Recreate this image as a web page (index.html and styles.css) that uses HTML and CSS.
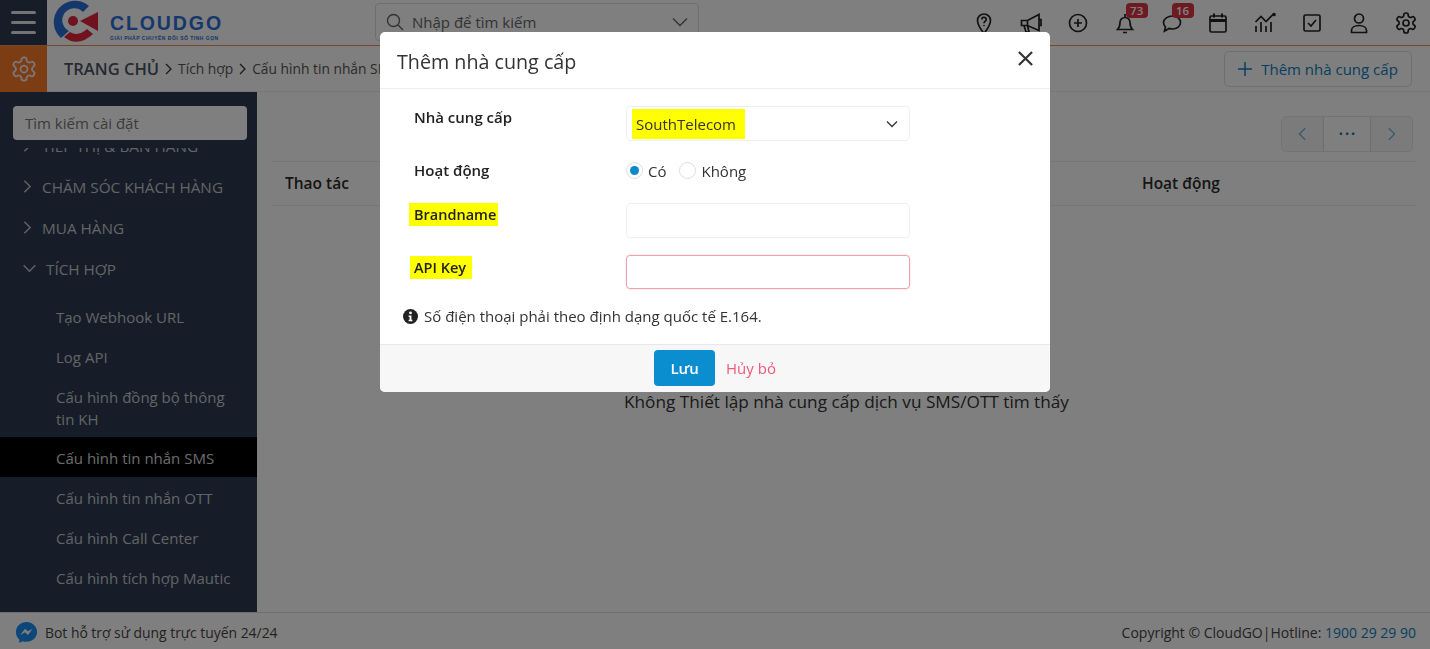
FILE: index.html
```html
<!DOCTYPE html>
<html lang="vi">
<head>
<meta charset="utf-8">
<title>Thiết lập nhà cung cấp</title>
<link rel="stylesheet" href="styles.css">
</head>
<body>
<div class="app">
  <header class="topbar">
    <div class="burger"><span></span><span></span><span></span></div>
    <div class="logo">
      <svg class="logo-mark" viewBox="0 0 50 44" width="50" height="44">
        <path d="M37 6A21 21 0 1 0 9 38L17 31A12 12 0 1 1 31 12Z" fill="#2a6fd8"/>
        <path d="M12 37Q26 48 41 34L35 29Q26 37 18 32Z" fill="#e0263f"/>
        <circle cx="21" cy="21" r="5" fill="#e0263f"/>
        <path d="M28 21 46 12V31Z" fill="#e0263f"/>
      </svg>
      <div class="logo-text">
        <div class="logo-name">CLOUDGO</div>
        <div class="logo-sub">GIẢI PHÁP CHUYỂN ĐỔI SỐ TINH GỌN</div>
      </div>
    </div>
    <div class="search">
      <svg viewBox="0 0 18 18" width="18" height="18" class="i-search"><circle cx="7.5" cy="7.5" r="6" fill="none" stroke="currentColor" stroke-width="1.4"/><path d="M12 12l5 5" stroke="currentColor" stroke-width="1.4"/></svg>
      <span class="search-text">Nhập để tìm kiếm</span>
      <svg viewBox="0 0 16 10" width="16" height="10" class="i-chev"><path d="M1 1.5l7 7 7-7" fill="none" stroke="currentColor" stroke-width="1.4"/></svg>
    </div>
    <nav class="tools">
      <svg class="tool" viewBox="0 0 24 24"><path d="M12 22.5C8 17.5 5.5 14 5.5 9.5a6.5 6.5 0 0 1 13 0c0 4.500-2.500 8-6.500 13Z"/><path d="M9.800 8.500a2.200 2.200 0 1 1 3.400 1.800c-.8.5-1.200 1-1.200 2M12 14v1"/></svg>
      <svg class="tool" viewBox="0 0 24 24"><path d="M2.500 9.500h6L20 3.500v16L8.500 14.500h-6ZM8.500 9.500v5M5 14.500l2 6.500h3l-1.500-6.500"/><path d="M20 8.500h2v6h-2"/></svg>
      <svg class="tool" viewBox="0 0 24 24"><circle cx="12" cy="12" r="8.500"/><path d="M12 8v8M8 12h8"/></svg>
      <span class="tool-wrap"><svg class="tool" viewBox="0 0 24 24"><path d="M4.500 18.500h15c-1.800-1.800-2.500-3.500-2.500-7a5 5 0 0 0-10 0c0 3.500-.7 5.200-2.500 7ZM12 3v3.500M10 21.500h4"/></svg><b class="badge">73</b></span>
      <span class="tool-wrap"><svg class="tool" viewBox="0 0 24 24"><path d="M12.500 5c4.500 0 8 2.800 8 6.500s-3.500 6.500-8 6.500c-1.200 0-2.300-.2-3.300-.6L4.500 20l1-4.200c-1.300-1.100-2-2.600-2-4.300C3.500 7.800 8 5 12.500 5Z"/></svg><b class="badge">16</b></span>
      <svg class="tool" viewBox="0 0 24 24"><rect x="4" y="5" width="16" height="16" rx="1.500"/><path d="M4 9.500h16" stroke-width="3"/><path d="M8 2.500v4M16 2.500v4" stroke-width="2"/></svg>
      <svg class="tool" viewBox="0 0 24 24"><path d="M2.500 11 8 5.500l5 5 7-7"/><path d="M3 15v6M8 11v10M13 15v6M18 11v10"/><circle cx="21" cy="3.500" r="1" /></svg>
      <svg class="tool" viewBox="0 0 24 24"><rect x="4" y="4" width="16" height="16" rx="1.500"/><path d="M8 12l3 3 5-6"/></svg>
      <svg class="tool" viewBox="0 0 24 24"><circle cx="12" cy="7.500" r="4.500"/><path d="M4.500 21.500v-2c0-3 3-5 7.500-5s7.500 2 7.500 5v2Z"/></svg>
      <svg class="tool" viewBox="0 0 24 24"><use href="#gear"/></svg>
    </nav>
  </header>

  <div class="subbar">
    <div class="gearbox"><svg viewBox="0 0 24 24" width="28" height="28" class="gear-big"><use href="#gear"/></svg></div>
    <div class="crumbs">
      <span class="crumb-home">TRANG CHỦ</span>
      <svg class="crumb-sep" viewBox="0 0 8 12" width="8" height="12"><path d="M1 1l5 5-5 5"/></svg>
      <span>Tích hợp</span>
      <svg class="crumb-sep" viewBox="0 0 8 12" width="8" height="12"><path d="M1 1l5 5-5 5"/></svg>
      <span>Cấu hình tin nhắn SMS</span>
    </div>
    <button class="add-btn"><svg viewBox="0 0 14 14" width="14" height="14"><path d="M7 0v14M0 7h14" stroke="currentColor" stroke-width="1.500"/></svg>Thêm nhà cung cấp</button>
  </div>

  <div class="main">
    <aside class="sidebar">
      <div class="side-search"><div class="side-input">Tìm kiếm cài đặt</div></div>
      <div class="menu">
        <div class="menu-clip">
          <div class="m-top"><svg class="m-arrow" viewBox="0 0 10 16"><path d="M1.500 1.500 8 8l-6.500 6.500"/></svg>TIẾP THỊ &amp; BÁN HÀNG</div>
          <div class="m-top"><svg class="m-arrow" viewBox="0 0 10 16"><path d="M1.500 1.500 8 8l-6.500 6.500"/></svg>CHĂM SÓC KHÁCH HÀNG</div>
          <div class="m-top"><svg class="m-arrow" viewBox="0 0 10 16"><path d="M1.500 1.500 8 8l-6.500 6.500"/></svg>MUA HÀNG</div>
          <div class="m-top m-open"><svg class="m-arrow-d" viewBox="0 0 16 10"><path d="M1.500 1.500 8 8l6.500-6.500"/></svg>TÍCH HỢP</div>
          <div class="m-sub m-sub-first">Tạo Webhook URL</div>
          <div class="m-sub">Log API</div>
          <div class="m-sub m-two">Cấu hình đồng bộ thông tin KH</div>
          <div class="m-sub m-active">Cấu hình tin nhắn SMS</div>
          <div class="m-sub">Cấu hình tin nhắn OTT</div>
          <div class="m-sub">Cấu hình Call Center</div>
          <div class="m-sub">Cấu hình tích hợp Mautic</div>
        </div>
      </div>
    </aside>
    <section class="content">
      <div class="pager-row">
        <div class="pager">
          <span class="pg pg-arrow"><svg viewBox="0 0 10 16" width="9" height="14"><path d="M8 1.500 1.500 8 8 14.500"/></svg></span>
          <span class="pg pg-dots">•••</span>
          <span class="pg pg-arrow"><svg viewBox="0 0 10 16" width="9" height="14"><path d="M2 1.500 8.500 8 2 14.500"/></svg></span>
        </div>
      </div>
      <div class="thead">
        <span class="th-action">Thao tác</span>
        <span class="th-status">Hoạt động</span>
      </div>
      <div class="empty">Không Thiết lập nhà cung cấp dịch vụ SMS/OTT tìm thấy</div>
    </section>
  </div>

  <footer class="footer">
    <div class="bot">
      <svg viewBox="0 0 24 24" width="23" height="23"><path d="M12 1C5.800 1 1 5.500 1 11.500c0 3.200 1.300 5.900 3.500 7.800V23l3.400-1.900c1.300.4 2.700.6 4.100.6 6.200 0 11-4.500 11-10.200S18.200 1 12 1Z" fill="#1a8cf0"/><path d="M5.500 14.500 10.500 8l3 2.800L18.500 8l-5 6.500-3-2.800Z" fill="#fff"/></svg>
      <span>Bot hỗ trợ sử dụng trực tuyến 24/24</span>
    </div>
    <div class="copy">Copyright © CloudGO|Hotline: <a>1900 29 29 90</a></div>
  </footer>
</div>

<svg class="defs" width="0" height="0"><defs>
  <symbol id="gear" viewBox="0 0 24 24"><path d="M12.220 2h-.44a2 2 0 0 0-2 2v.18a2 2 0 0 1-1 1.730l-.43.25a2 2 0 0 1-2 0l-.15-.08a2 2 0 0 0-2.730.73l-.22.38a2 2 0 0 0 .73 2.730l.15.1a2 2 0 0 1 1 1.720v.51a2 2 0 0 1-1 1.740l-.15.09a2 2 0 0 0-.73 2.730l.22.38a2 2 0 0 0 2.730.73l.15-.08a2 2 0 0 1 2 0l.43.25a2 2 0 0 1 1 1.730V20a2 2 0 0 0 2 2h.44a2 2 0 0 0 2-2v-.18a2 2 0 0 1 1-1.730l.43-.25a2 2 0 0 1 2 0l.15.08a2 2 0 0 0 2.730-.73l.22-.39a2 2 0 0 0-.73-2.730l-.15-.08a2 2 0 0 1-1-1.740v-.5a2 2 0 0 1 1-1.740l.15-.09a2 2 0 0 0 .73-2.730l-.22-.38a2 2 0 0 0-2.730-.73l-.15.08a2 2 0 0 1-2 0l-.43-.25a2 2 0 0 1-1-1.730V4a2 2 0 0 0-2-2z"/><circle cx="12" cy="12" r="3"/></symbol>
</defs></svg>

<div class="backdrop"></div>
<div class="modal">
  <div class="modal-head">
    <h2>Thêm nhà cung cấp</h2>
    <svg class="close" viewBox="0 0 16 16" width="15" height="15"><path d="M1 1l14 14M15 1 1 15"/></svg>
  </div>
  <div class="modal-body">
    <div class="form">
      <label class="lbl">Nhà cung cấp</label>
      <div class="select"><span class="hl-val">SouthTelecom</span><svg viewBox="0 0 12 8" width="12" height="8"><path d="M1 1.500l5 5 5-5" fill="none" stroke="#333" stroke-width="1.300"/></svg></div>
      <label class="lbl lbl-active">Hoạt động</label>
      <div class="radios">
        <span class="radio radio-on"></span><span class="radio-t">Có</span>
        <span class="radio"></span><span class="radio-t">Không</span>
      </div>
      <label class="lbl lbl-brand"><span class="hl">Brandname</span></label>
      <div class="input"></div>
      <label class="lbl lbl-api"><span class="hl">API Key</span></label>
      <div class="input input-err"></div>
    </div>
    <div class="note">
      <svg viewBox="0 0 16 16" width="15" height="15"><circle cx="8" cy="8" r="8" fill="#222"/><circle cx="8" cy="4.200" r="1.500" fill="#fff"/><path d="M6 7h3v4.500h1V13H6v-1.500h1V8.500H6Z" fill="#fff"/></svg>
      <span>Số điện thoại phải theo định dạng quốc tế E.164.</span>
    </div>
  </div>
  <div class="modal-foot">
    <button class="save">Lưu</button>
    <span class="cancel">Hủy bỏ</span>
  </div>
</div>
</body>
</html>
```
FILE: styles.css
```css
* { box-sizing: border-box; }
html, body { margin: 0; padding: 0; height: 100%; overflow: hidden; }
body { font-family: "Open Sans", "Noto Sans", sans-serif; color: #333; background: #fff; font-size: 14px; }
.defs { position: absolute; }
.app { display: flex; flex-direction: column; height: 649px; }

.topbar { height: 46px; flex: none; display: flex; align-items: stretch; background: #fff; border-bottom: 1px solid #fa8a4e; }
.burger { width: 47px; background: #2c3b50; display: flex; flex-direction: column; justify-content: center; gap: 7px; padding: 0 11px; }
.burger span { display: block; height: 3px; border-radius: 2px; background: #e8e8e8; }
.logo { display: flex; width: 328px; padding-left: 5px; gap: 8px; }
.logo-mark { flex: none; }
.logo-text { padding-top: 11px; }
.logo-name { font: 700 19.500px/24px "Liberation Sans", sans-serif; letter-spacing: 1.900px; color: #2a6fd8; }
.logo-sub { font: 700 5px/7px "Liberation Sans", sans-serif; letter-spacing: .5px; color: #2a6fd8; white-space: nowrap; }
.search { width: 324px; height: 38px; margin-top: 3px; border: 1px solid #ddd; border-radius: 4px; display: flex; align-items: center; padding: 0 10px; color: #666; }
.i-search { flex: none; }
.search-text { flex: 1; margin-left: 8px; font-size: 15px; }
.tools { margin-left: auto; display: flex; align-items: center; gap: 22.900px; padding-right: 12px; }
.tool { width: 24px; height: 24px; fill: none; stroke: #222; stroke-width: 1.700; display: block; flex: none; }
.tool-wrap { position: relative; display: block; }
.tool-wrap:nth-child(4) .badge { left: 13px; }
.badge { position: absolute; left: 12px; top: -8px; width: 22px; height: 15px; border-radius: 4px; background: #dc3545; color: #fff; font: 600 11.500px/15px "Open Sans", sans-serif; text-align: center; }

.subbar { height: 46px; flex: none; display: flex; align-items: center; background: #fff; border-bottom: 1px solid #eee; }
.gearbox { width: 47px; height: 46px; flex: none; background: #fa7a28; display: flex; align-items: center; justify-content: center; }
.gear-big { fill: none; stroke: #f2f2f2; stroke-width: 1.500; }
.crumbs { display: flex; align-items: center; padding-left: 17px; color: #555; font-size: 13.800px; gap: 5.500px; white-space: nowrap; }
.crumb-home { font-size: 16.500px; font-weight: 600; color: #4a5564; }
.crumb-sep { fill: none; stroke: #333; stroke-width: 1.300; }
.add-btn { margin-left: auto; margin-right: 18px; width: 188px; height: 36px; display: flex; align-items: center; justify-content: center; gap: 9px; background: #fff; border: 1px solid #ddd; border-radius: 5px; color: #0a80bf; font: 15px "Open Sans", sans-serif; padding: 1px 0 0; }

.main { flex: 1; min-height: 0; display: flex; }
.sidebar { width: 257px; flex: none; background: #2c3b50; display: flex; flex-direction: column; }
.side-search { padding: 14px 10px 8px 13px; flex: none; }
.side-input { height: 34px; background: #fff; border-radius: 4px; padding: 1px 12px 0; line-height: 33px; font-size: 15px; color: #777; }
.menu { flex: 1; min-height: 0; overflow: hidden; }
.menu-clip { margin-top: -23px; }
.m-top { height: 41px; display: flex; align-items: center; padding-left: 23px; gap: 10px; font-size: 15.300px; color: #c4c8ce; white-space: nowrap; }
.m-open { padding-left: 22px; gap: 9px; }
.m-arrow { width: 9px; height: 15px; fill: none; stroke: #c4c8ce; stroke-width: 1.500; flex: none; }
.m-arrow-d { width: 15px; height: 9px; fill: none; stroke: #c4c8ce; stroke-width: 1.500; flex: none; }
.m-sub { padding: 1px 24px 0 56px; height: 40px; display: flex; align-items: center; font-size: 15px; line-height: 22px; color: #c4c8ce; }
.m-sub-first { margin-top: 7px; }
.m-two { height: 61px; padding-top: 2px; }
.m-active { background: #000; color: #d8d8d8; }

.content { flex: 1; min-width: 0; padding: 0 14px 0 15px; display: flex; flex-direction: column; }
.pager-row { display: flex; justify-content: flex-end; padding-top: 24px; height: 70px; border-bottom: 1px solid #eee; }
.pager { display: flex; height: 36px; border: 1px solid #e6e6e6; border-radius: 5px; margin-right: 3px; background: #f7f7f7; }
.pg { display: flex; align-items: center; justify-content: center; }
.pg-arrow { width: 41px; color: #6cb6de; }
.pg-arrow svg { fill: none; stroke: #6cb6de; stroke-width: 1.500; }
.pg-dots { width: 48px; background: #fff; border-left: 1px solid #ddd; border-right: 1px solid #ddd; color: #0a6ea8; font-size: 11px; letter-spacing: 2px; padding: 0 0 1px 2px; }
.thead { height: 44px; display: flex; align-items: center; border-bottom: 1px solid #eee; font-size: 15.500px; font-weight: 600; color: #2b2b2b; padding: 0 0 2px 13px; }
.th-action { width: 857px; flex: none; }
.empty { margin-top: 184px; text-align: center; font-size: 17.200px; line-height: 24px; color: #333; padding-left: 5px; }

.footer { height: 37px; flex: none; display: flex; align-items: center; justify-content: space-between; background: #fff; border-top: 1px solid #ddd; padding: 2px 14px 0; font-size: 14px; color: #444; }
.bot { display: flex; align-items: center; gap: 7px; font-size: 13.900px; padding-left: 1px; }
.copy a { color: #0a80bf; }

.backdrop { position: fixed; inset: 0; background: rgba(0, 0, 0, .5); }
.modal { position: fixed; left: 380px; top: 32px; width: 670px; height: 360px; background: #fff; border-radius: 5px; display: flex; flex-direction: column; overflow: hidden; }
.modal-head { height: 57px; flex: none; display: flex; align-items: center; justify-content: space-between; padding: 2px 17px 0; border-bottom: 1px solid #eee; }
.modal-head h2 { margin: 0; font-size: 19.700px; font-weight: 500; color: #333; }
.close { fill: none; stroke: #333; stroke-width: 2.300; margin-top: -6px; }
.modal-body { flex: 1; padding: 17px 23px 0; }
.form { display: grid; grid-template-columns: 212px 284px; grid-template-rows: 35px 62px 52px 34px; align-items: start; padding-left: 11px; }
.lbl { font-size: 15px; font-weight: 600; color: #222; line-height: 22px; }
.lbl-active { padding-top: 18px; }
.select { height: 35px; border: 1px solid #eee; border-radius: 4px; display: flex; align-items: center; justify-content: space-between; padding: 0 11px 0 5px; }
.hl-val { background: #ffff00; width: 113px; height: 30px; line-height: 30px; padding-left: 4px; font-size: 15px; color: #333; }
.radios { display: flex; align-items: center; height: 22px; margin-top: 18px; }
.radio { width: 17px; height: 17px; border-radius: 50%; border: 1px solid #ddd; background: #fff; flex: none; }
.radio-on { position: relative; }
.radio-on::after { content: ""; position: absolute; left: 3px; top: 3px; width: 9px; height: 9px; border-radius: 50%; background: #0a88cc; }
.radio-t { margin: 1px 13px 0 5px; font-size: 15px; color: #333; }
.lbl-brand { margin-left: -5px; }
.lbl-api { margin-left: -4px; margin-top: 1px; }
.hl { display: inline-block; background: #ffff00; font-size: 14.500px; line-height: 23px; padding: 0 2px 0 5px; }
.lbl-api .hl { padding: 0 6px 0 4px; }
.input { height: 35px; border: 1px solid #eee; border-radius: 4px; }
.input-err { height: 34px; border-color: #f3a0ae; box-shadow: 0 0 2px #f8c0c8; }
.note { display: flex; align-items: center; gap: 6px; margin-top: 17px; line-height: 20px; font-size: 15px; color: #333; }
.modal-foot { height: 48px; flex: none; display: flex; align-items: center; justify-content: center; gap: 11px; background: #f7f7f7; border-top: 1px solid #e8e8e8; padding: 0 0 2px; }
.save { width: 61px; height: 36px; background: #0a8ed0; color: #fff; border: 0; border-radius: 4px; font: 600 15px "Open Sans", sans-serif; }
.cancel { color: #ee5a78; font-size: 15px; }
```
